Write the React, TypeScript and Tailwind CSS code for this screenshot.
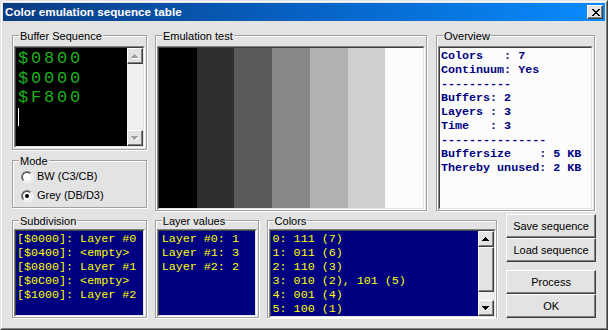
import type { ReactNode } from 'react';

const FACE = 'bg-[#e3e3e3]';

// classic etched group box, label sits on top of the border
function Group({ label, className, children }: { label: string; className: string; children?: ReactNode }) {
  return (
    <div
      className={`relative flex flex-col border border-[#a0a0a0] shadow-[inset_1px_1px_0_#fff,1px_1px_0_#fff] ${className}`}
    >
      <span className={`absolute -top-[6px] left-[6px] px-[1px] leading-[13px] ${FACE}`}>{label}</span>
      {children}
    </div>
  );
}

// two pixel sunken edge
function Sunken({ className, children }: { className: string; children?: ReactNode }) {
  return (
    <div className="flex-1 flex border border-t-[#808080] border-l-[#808080] border-r-white border-b-white">
      <div
        className={`flex-1 flex min-w-0 border border-t-[#404040] border-l-[#404040] border-r-[#e3e3e3] border-b-[#e3e3e3] ${className}`}
      >
        {children}
      </div>
    </div>
  );
}

function Raised({ className, children }: { className: string; children?: ReactNode }) {
  return (
    <div
      className={`flex items-center justify-center ${FACE} border border-t-white border-l-white border-r-[#404040] border-b-[#404040] shadow-[inset_-1px_-1px_0_#808080] ${className}`}
    >
      {children}
    </div>
  );
}

function Arrow({ up, disabled }: { up: boolean; disabled?: boolean }) {
  const d = up
    ? 'M3 0h1v1h1v1h1v1h1v1H0V3h1V2h1V1h1z'
    : 'M0 0h7v1H6v1H5v1H4v1H3V3H2V2H1V1H0z';
  return (
    <svg width="8" height="5" viewBox="0 0 8 5" shapeRendering="crispEdges">
      {disabled && <path d={d} transform="translate(1 1)" fill="#fff" />}
      <path d={d} fill={disabled ? '#a0a0a0' : '#000'} />
    </svg>
  );
}

function ScrollBar({ disabled }: { disabled?: boolean }) {
  return (
    <div className="w-[16px] flex flex-col bg-[#efefef]">
      <Raised className="h-[16px]">
        <Arrow up disabled={disabled} />
      </Raised>
      {disabled ? (
        <div className="flex-1" />
      ) : (
        <>
          <Raised className="h-[45px]" />
          <div className="flex-1" />
        </>
      )}
      <Raised className="h-[16px]">
        <Arrow up={false} disabled={disabled} />
      </Raised>
    </div>
  );
}

function Radio({ label, checked }: { label: string; checked?: boolean }) {
  return (
    <div className="h-[19px] flex items-center">
      <div className="w-[12px] h-[12px] rounded-full border border-t-[#808080] border-l-[#808080] border-r-white border-b-white">
        <div className="w-full h-full rounded-full bg-white border border-t-[#404040] border-l-[#404040] border-r-[#e3e3e3] border-b-[#e3e3e3] flex items-center justify-center">
          {checked && <div className="w-[4px] h-[4px] rounded-full bg-black" />}
        </div>
      </div>
      <span className="ml-[4px]">{label}</span>
    </div>
  );
}

const stripes = ['#000000', '#2f2f2f', '#5b5b5b', '#878787', '#b1b1b1', '#d0d0d0', '#fcfcfc'];

const overview = [
  'Colors   : 7',
  'Continuum: Yes',
  '----------',
  'Buffers: 2',
  'Layers : 3',
  'Time   : 3',
  '---------------',
  'Buffersize    : 5 KB',
  'Thereby unused: 2 KB',
];

const subdivision = [
  '[$0000]: Layer #0',
  '[$0400]: <empty>',
  '[$0800]: Layer #1',
  '[$0C00]: <empty>',
  '[$1000]: Layer #2',
];

const layerValues = ['Layer #0: 1', 'Layer #1: 3', 'Layer #2: 2'];

const colors = ['0: 111 (7)', '1: 011 (6)', '2: 110 (3)', '3: 010 (2), 101 (5)', '4: 001 (4)', '5: 100 (1)'];

const listText = "font-['Liberation_Mono',monospace] text-[11.7px] leading-[14px] text-[#ffff00] whitespace-pre";

export default function App() {
  return (
    <div className="w-[608px] h-[330px] bg-[#e3e3e3] font-['Liberation_Sans',Arial,sans-serif] text-[11px] text-black overflow-hidden">
      <div className="w-full h-full border border-t-[#e3e3e3] border-l-[#e3e3e3] border-r-[#404040] border-b-[#404040]">
        <div className="w-full h-full border border-t-white border-l-white border-r-[#808080] border-b-[#808080] p-[1px] flex flex-col">
          {/* Title bar */}
          <div className="h-[18px] flex items-center justify-between pl-[2px] pr-[2px] bg-linear-to-r from-[#0a3c82] via-[#0662c4] to-[#0a8cff]">
            <span className="text-white font-bold text-[11.7px] leading-none">Color emulation sequence table</span>
            <Raised className="w-[16px] h-[14px]">
              <svg width="9" height="7" viewBox="0 0 9 7" shapeRendering="crispEdges">
                <path d="M0 0h2l2.5 2.5L7 0h2L5.5 3.5 9 7H7L4.5 4.5 2 7H0l3.5-3.5z" fill="#000" />
              </svg>
            </Raised>
          </div>

          <div className="px-[9px]">
            {/* Top row */}
            <div className="mt-[14px] h-[176px] flex">
              <div className="w-[135px] mr-[8px] flex flex-col">
                <Group label="Buffer Sequence" className="h-[115px] pt-[10px] pb-[1px] px-[1px]">
                  <Sunken className="bg-black">
                    <div className="flex-1 pl-[2px] pt-[1px] font-['Liberation_Mono',monospace] text-[17px] tracking-[2.8px] leading-[19.5px] text-[#1cb41c]">
                      <div>$0800</div>
                      <div>$0000</div>
                      <div>$F800</div>
                      <div className="h-[19.5px] flex items-center">
                        <div className="w-[1px] h-[18px] bg-white" />
                      </div>
                    </div>
                    <ScrollBar disabled />
                  </Sunken>
                </Group>
                <Group label="Mode" className="mt-[10px] h-[48px] pt-[6px] pl-[8px]">
                  <Radio label="BW (C3/CB)" />
                  <Radio label="Grey (DB/D3)" checked />
                </Group>
              </div>

              <Group label="Emulation test" className="w-[272px] mr-[9px] pt-[10px] px-[1px]">
                <Sunken className="bg-white">
                  {stripes.map((c) => (
                    <div key={c} className="flex-1" style={{ backgroundColor: c }} />
                  ))}
                </Sunken>
              </Group>

              <Group label="Overview" className="w-[159px] pt-[10px] px-[1px]">
                <Sunken className="bg-[#fcfcfc]">
                  <div className="pl-[1px] pt-[1px] font-['Liberation_Mono',monospace] font-bold text-[11.7px] leading-[14px] text-[#000080] whitespace-pre">
                    {overview.map((l, i) => (
                      <div key={i}>{l}</div>
                    ))}
                  </div>
                </Sunken>
              </Group>
            </div>

            {/* Bottom row */}
            <div className="mt-[3px] h-[104px] flex">
              <Group label="Subdivision" className="mt-[6px] w-[135px] h-[98px] mr-[8px] pt-[8px] px-[1px]">
                <Sunken className="bg-[#000080]">
                  <div className={`pl-[1px] pt-[1px] ${listText}`}>
                    {subdivision.map((l) => (
                      <div key={l}>{l}</div>
                    ))}
                  </div>
                </Sunken>
              </Group>

              <Group label="Layer values" className="mt-[6px] w-[104px] h-[98px] mr-[8px] pt-[8px] px-[1px]">
                <Sunken className="bg-[#000080]">
                  <div className={`pl-[3px] pt-[1px] ${listText}`}>
                    {layerValues.map((l) => (
                      <div key={l}>{l}</div>
                    ))}
                  </div>
                </Sunken>
              </Group>

              <Group label="Colors" className="mt-[6px] w-[231px] h-[98px] mr-[9px] pt-[8px] pl-[1px]">
                <Sunken className="bg-[#000080]">
                  <div className={`flex-1 pl-[2px] pt-[1px] ${listText}`}>
                    {colors.map((l) => (
                      <div key={l}>{l}</div>
                    ))}
                  </div>
                  <ScrollBar />
                </Sunken>
              </Group>

              <div className="w-[90px] flex flex-col">
                <Raised className="h-[24px]">Save sequence</Raised>
                <Raised className="h-[24px]">Load sequence</Raised>
                <Raised className="mt-[8px] h-[24px]">Process</Raised>
                <Raised className="h-[24px]">OK</Raised>
              </div>
            </div>
          </div>
        </div>
      </div>
    </div>
  );
}
